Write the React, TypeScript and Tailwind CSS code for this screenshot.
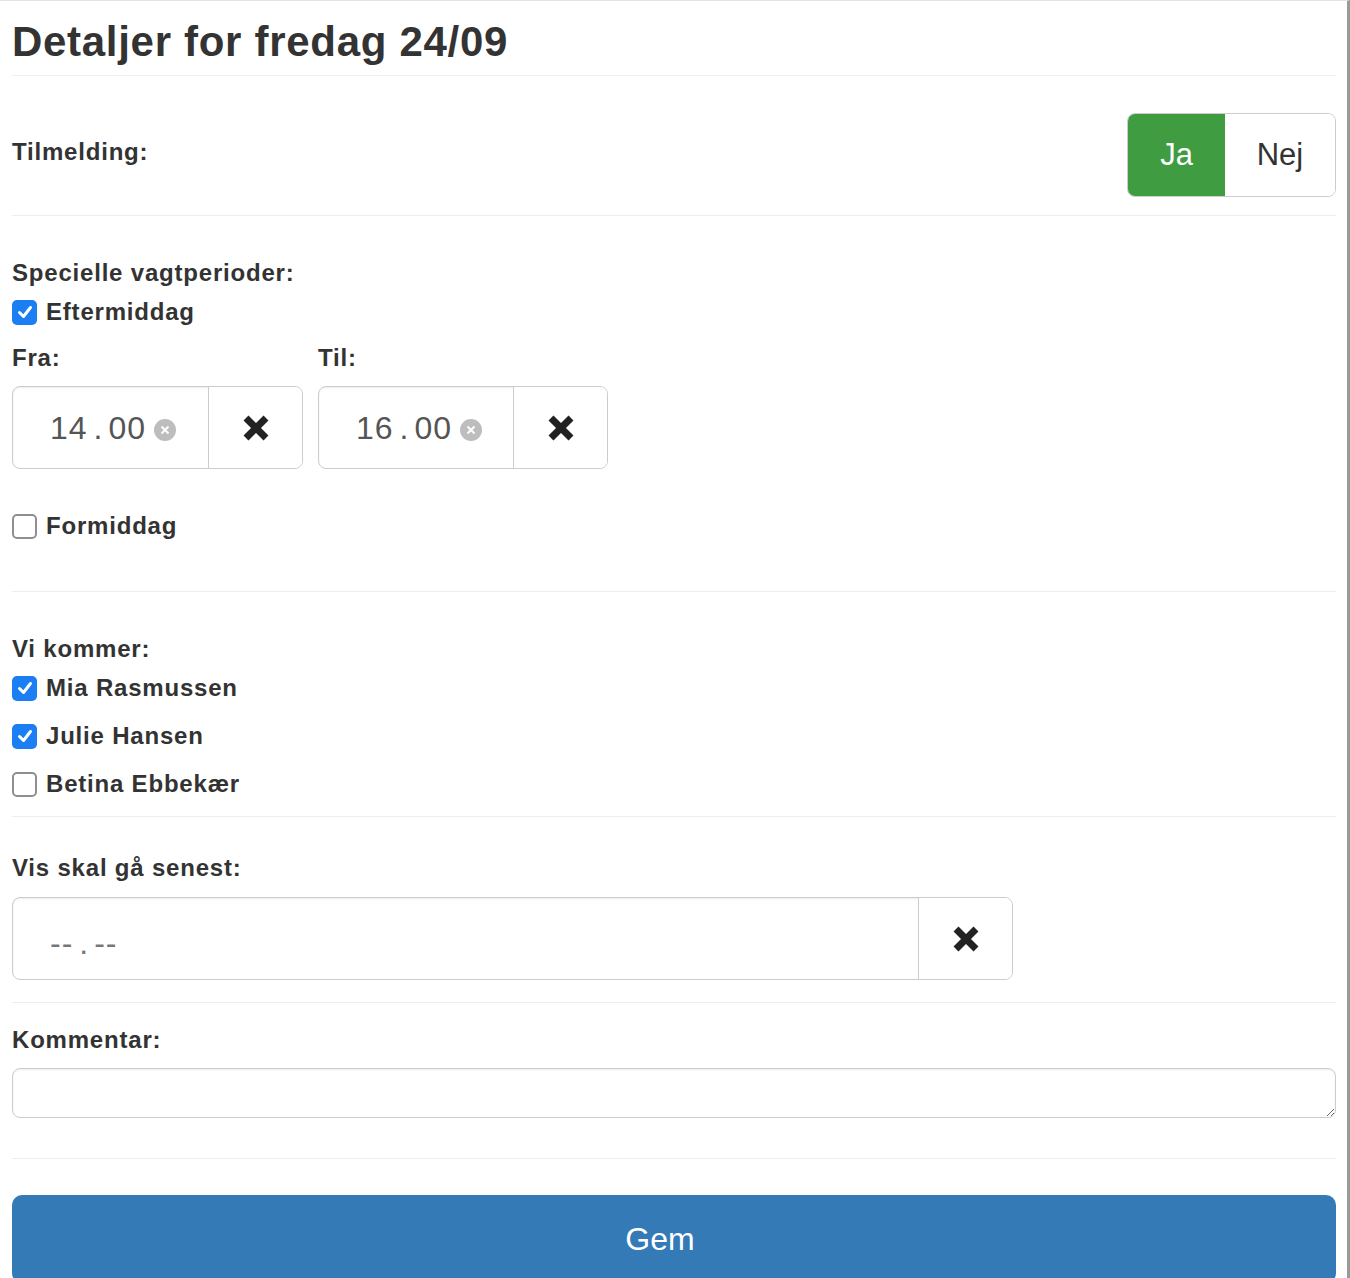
import React from 'react';

const font = { fontFamily: '"Liberation Sans", Arial, sans-serif' };

function RemoveIcon() {
  return (
    <svg width="30" height="30" viewBox="0 0 30 30">
      <path d="M5 5 L25 25 M25 5 L5 25" stroke="#222" strokeWidth="7" strokeLinecap="butt" />
    </svg>
  );
}

function ClearIcon() {
  return (
    <svg width="22" height="22" viewBox="0 0 22 22" className="ml-[8px] mt-[4px]">
      <circle cx="11" cy="11" r="11" fill="#bdbdbd" />
      <path d="M7.5 7.5 L14.5 14.5 M14.5 7.5 L7.5 14.5" stroke="#fff" strokeWidth="2" />
    </svg>
  );
}

function Checkbox({ checked, label }: { checked: boolean; label: string }) {
  return (
    <label className="flex h-[30px] items-center gap-[9px]">
      {checked ? (
        <span className="flex h-[25px] w-[25px] items-center justify-center rounded-[5px] bg-[#1b7ef2]">
          <svg width="18" height="18" viewBox="0 0 18 18">
            <path d="M3.5 9.5 L7.5 13.5 L14.5 4.5" stroke="#fff" strokeWidth="3" fill="none" strokeLinecap="round" strokeLinejoin="round" />
          </svg>
        </span>
      ) : (
        <span className="h-[25px] w-[25px] rounded-[5px] border-2 border-[#8f8f93] bg-white" />
      )}
      <span className="text-[24px] font-bold tracking-[0.8px] text-[#333]">{label}</span>
    </label>
  );
}

function Label({ children, className = '' }: { children: React.ReactNode; className?: string }) {
  return (
    <div className={`flex h-[30px] items-center text-[24px] font-bold tracking-[0.8px] text-[#333] ${className}`}>
      {children}
    </div>
  );
}

function TimeInput({ value, width }: { value?: [string, string]; width: string }) {
  return (
    <div className={`flex h-[83px] overflow-hidden rounded-[8px] border border-[#ccc] bg-white shadow-[inset_0_1px_2px_rgba(0,0,0,0.08)] ${width}`}>
      <div className="flex flex-1 items-center pl-[37px] text-[32px] text-[#555]">
        {value ? (
          <>
            <span className="tracking-[1px]">{value[0]}</span>
            <span className="mx-[6px]">.</span>
            <span className="tracking-[1px]">{value[1]}</span>
            <ClearIcon />
          </>
        ) : (
          <span className="mt-[8px] flex text-[#777]">
            <span className="tracking-[1px]">--</span>
            <span className="mx-[6px]">.</span>
            <span className="tracking-[1px]">--</span>
          </span>
        )}
      </div>
      <button className="flex w-[94px] items-center justify-center border-l border-[#ccc] bg-white">
        <RemoveIcon />
      </button>
    </div>
  );
}

export default function App() {
  return (
    <div style={font} className="h-[1278px] w-full overflow-hidden border-t border-r-[3px] border-t-[#e3e3e3] border-r-[#9a9a9a] bg-white text-[#333]">
      <div className="pl-[12px] pr-[11px]">
        {/* Heading */}
        <div className="border-b border-[#f0f0f0] pb-[12px] pt-[20px]">
          <h3 className="text-[42px] font-bold leading-[42px] tracking-[0.7px] text-[#333]">Detaljer for fredag 24/09</h3>
        </div>

        {/* Tilmelding */}
        <div className="flex items-center justify-between border-b border-[#eee] pb-[18px] pt-[37px]">
          <Label className="-mt-[6px]">Tilmelding:</Label>
          <div className="flex h-[84px] overflow-hidden rounded-[8px] border border-[#ccc]">
            <button className="w-[97px] bg-[#409c40] text-[31px] text-white">Ja</button>
            <button className="w-[110px] bg-white text-[31px] text-[#333]">Nej</button>
          </div>
        </div>

        {/* Specielle vagtperioder */}
        <div className="border-b border-[#eee] pb-[50px] pt-[42px]">
          <Label>Specielle vagtperioder:</Label>
          <div className="mt-[9px]">
            <Checkbox checked label="Eftermiddag" />
          </div>
          <div className="mt-[16px] flex gap-[15px]">
            <div>
              <Label>Fra:</Label>
              <div className="mt-[13px]">
                <TimeInput value={['14', '00']} width="w-[291px]" />
              </div>
            </div>
            <div>
              <Label>Til:</Label>
              <div className="mt-[13px]">
                <TimeInput value={['16', '00']} width="w-[290px]" />
              </div>
            </div>
          </div>
          <div className="mt-[42px]">
            <Checkbox checked={false} label="Formiddag" />
          </div>
        </div>

        {/* Vi kommer */}
        <div className="border-b border-[#eee] pb-[17px] pt-[42px]">
          <Label>Vi kommer:</Label>
          <div className="mt-[9px] flex flex-col gap-[18px]">
            <Checkbox checked label="Mia Rasmussen" />
            <Checkbox checked label="Julie Hansen" />
            <Checkbox checked={false} label="Betina Ebbekær" />
          </div>
        </div>

        {/* Vis skal gå senest */}
        <div className="border-b border-[#eee] pb-[22px] pt-[36px]">
          <Label>Vis skal gå senest:</Label>
          <div className="mt-[14px]">
            <TimeInput width="w-[1001px]" />
          </div>
        </div>

        {/* Kommentar */}
        <div className="border-b border-[#eee] pb-[40px] pt-[22px]">
          <Label>Kommentar:</Label>
          <textarea className="mt-[13px] block h-[50px] w-full rounded-[8px] border border-[#ccc] shadow-[inset_0_1px_2px_rgba(0,0,0,0.08)] outline-none" />
        </div>

        <button className="mt-[36px] flex h-[88px] w-full items-center justify-center rounded-[10px] bg-[#337ab7] pr-[28px] text-[32px] text-white">
          Gem
        </button>
      </div>
    </div>
  );
}
